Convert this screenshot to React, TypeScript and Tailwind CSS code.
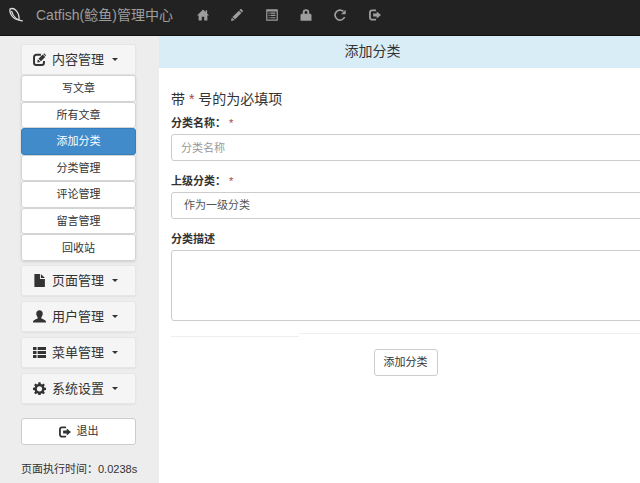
import { useState } from 'react'
import type { ReactNode } from 'react'

type IconName = 'home' | 'pencil' | 'list' | 'bag' | 'repeat' | 'logout' | 'edit' | 'file' | 'user' | 'rows' | 'cog'

const icons: Record<IconName, ReactNode> = {
  home: <path d="M7 .5 0 7.600h1.900V13.500h3.700V9h2.800v4.500h3.700V7.600H14l-2.200-2.300V1.500h-1.700v2z" />,
  pencil: <path d="m0 14 1-4 3 3zM1.700 9.400 9.200 1.900l2.900 2.900-7.500 7.500zM9.900 1.200l.8-.8c.5-.5 1-.5 1.500 0l1.400 1.400c.5.5.5 1 0 1.500l-.8.8z" />,
  list: (
    <path
      fillRule="evenodd"
      d="M.8.3h12.400a.6.6 0 0 1 .6.6v12.200a.6.6 0 0 1-.6.6H.8a.6.6 0 0 1-.6-.6V.9A.6.6 0 0 1 .8.3zm.8 2.500v9.500h10.800V2.800zM3 4h1.200v1.400H3zm2.200 0H11v1.400H5.200zM3 6.800h1.200v1.400H3zm2.200 0H11v1.400H5.200zM3 9.500h1.200v1.400H3zm2.200 0H11v1.400H5.200z"
    />
  ),
  bag: <path fillRule="evenodd" d="M3.200 5.500V4a3.800 3.800 0 0 1 7.600 0v1.500h1.400l1.200 1.200v7.100H.6V6.700l1.200-1.200zm2.200 0h3.200V4a1.600 1.600 0 0 0-3.200 0z" />,
  repeat: (
    <>
      <path d="M12.400 9.300A5.800 5.800 0 1 1 11 2.900" fill="none" stroke="currentColor" strokeWidth="2" />
      <path d="M13.600.8v5.400H8.200z" />
    </>
  ),
  logout: (
    <>
      <path d="M8.200 1.600H3.600A2.500 2.500 0 0 0 1.100 4.100v5.800a2.500 2.500 0 0 0 2.500 2.500h4.600" fill="none" stroke="currentColor" strokeWidth="2.100" />
      <path d="M9 2.800 14 7l-5 4.200V8.700H4.800V5.300H9z" />
    </>
  ),
  edit: (
    <>
      <path d="M8.500 1.900H3.600a2.500 2.500 0 0 0-2.500 2.500v6a2.500 2.500 0 0 0 2.500 2.500h5.700a2.500 2.500 0 0 0 2.500-2.500V8.600" fill="none" stroke="currentColor" strokeWidth="2.100" />
      <path d="m4.600 10.200.6-3.400 2.800 2.800zM5.900 6.200l4.600-4.600 2.700 2.700-4.600 4.600zM11.200 1l.8-.8L14 2.300l-.7 1.200z" />
    </>
  ),
  file: <path d="M1.500 0h6v5.300h5.300V14H1.500zM8.500 0l4.300 4.300H8.500z" />,
  user: <path d="M7 .2c2.200 0 3.500 1.500 3.500 3.700 0 1.700-.6 3-1.500 4v1.300c1.700.7 4.600 1.500 5 3.300v1H0v-1c.4-1.800 3.300-2.600 5-3.300V7.900c-.9-1-1.500-2.300-1.500-4C3.500 1.700 4.800.2 7 .2z" />,
  rows: <path d="M0 1h3.800v3.200H0zM5 1h9v3.200H5zM0 5.400h3.800v3.200H0zM5 5.400h9v3.200H5zM0 9.800h3.800V13H0zM5 9.800h9V13H5z" />,
  cog: (
    <path
      fillRule="evenodd"
      d="M5.900.3h2.200l.4 1.900 1.200.5 1.600-1.100 1.500 1.500-1.100 1.600.5 1.200 1.900.4v2.200l-1.900.4-.5 1.200 1.100 1.600-1.500 1.500-1.600-1.100-1.200.5-.4 1.900H5.900l-.4-1.900-1.200-.5-1.600 1.100-1.500-1.500 1.100-1.600-.5-1.200L0 8.500V6.300l1.800-.4.500-1.200-1.100-1.600 1.500-1.500 1.600 1.100 1.200-.5zM7 4.500a2.800 2.800 0 1 0 0 5.600 2.800 2.800 0 0 0 0-5.600z"
    />
  ),
}

function Icon({ name, className }: { name: IconName; className?: string }) {
  return (
    <svg viewBox="0 0 14 14" fill="currentColor" aria-hidden="true" className={`shrink-0 ${className ?? 'size-3'}`}>
      {icons[name]}
    </svg>
  )
}

const shortcuts: { icon: IconName; label: string }[] = [
  { icon: 'home', label: '首页' },
  { icon: 'pencil', label: '写文章' },
  { icon: 'list', label: '所有文章' },
  { icon: 'bag', label: '修改密码' },
  { icon: 'repeat', label: '清除缓存' },
  { icon: 'logout', label: '退出' },
]

const articleLinks = ['写文章', '所有文章', '添加分类', '分类管理', '评论管理', '留言管理', '回收站']

const otherMenus: { icon: IconName; label: string }[] = [
  { icon: 'file', label: '页面管理' },
  { icon: 'user', label: '用户管理' },
  { icon: 'rows', label: '菜单管理' },
  { icon: 'cog', label: '系统设置' },
]

function MenuButton({ icon, label, onClick }: { icon: IconName; label: string; onClick?: () => void }) {
  return (
    <button
      type="button"
      onClick={onClick}
      className="flex h-[31px] w-full items-center rounded-xs border border-[#e6e6e6] bg-[#f5f5f5] pl-[11px] text-[13px] shadow-xs"
    >
      <Icon name={icon} className="size-[13px]" />
      <span className="ml-[6px]">{label}</span>
      <span className="ml-2 border-x-[3px] border-t-[3px] border-x-transparent border-t-[#333]" />
    </button>
  )
}

function Required() {
  return <span className="font-normal text-[#a94442]">*</span>
}

export default function App() {
  const [open, setOpen] = useState(true)
  const [active, setActive] = useState('添加分类')

  return (
    <div className="flex min-h-screen flex-col overflow-hidden bg-white font-['Liberation_Sans','Noto_Sans_CJK_SC',sans-serif] text-[11px] text-[#333]">
      <header className="flex h-9 items-center border-b border-[#101010] bg-[#222] pb-[5px] pl-2 text-[#9d9d9d]">
        <svg viewBox="0 0 16 16" fill="none" stroke="#ddd" aria-hidden="true" className="size-4">
          <path d="M2.200 1.800C5 .8 8 2.800 9.800 6c1.200 2.200 1.500 4.800 1 6.800C8 12.800 5 11 3.300 8 2 5.800 1.600 3.500 2.200 1.800z" strokeWidth="1.300" />
          <path d="M3.500 4c1.300 4.500 5 9.800 11.500 10" strokeWidth="1.200" />
        </svg>
        <a href="#" className="ml-3 text-sm leading-5">Catfish(鲶鱼)管理中心</a>
        <nav className="ml-6 flex w-[184px] justify-between">
          {shortcuts.map((item) => (
            <a key={item.icon} href="#" aria-label={item.label}>
              <Icon name={item.icon} />
            </a>
          ))}
        </nav>
      </header>

      <div className="flex flex-1">
        <aside className="w-[159px] shrink-0 bg-[#ededed] pt-2 pr-[23px] pl-[21px]">
          <MenuButton icon="edit" label="内容管理" onClick={() => setOpen(!open)} />
          {open && (
            <div className="flex h-[186px] flex-col rounded-[3px] shadow-sm">
              {articleLinks.map((label) => (
                <a
                  key={label}
                  href="#"
                  onClick={() => setActive(label)}
                  className={`flex flex-1 items-center justify-center rounded-[3px] border ${
                    label === active ? 'border-[#357ebd] bg-[#428bca] text-white' : 'border-[#d4d4d4] bg-white'
                  }`}
                >
                  {label}
                </a>
              ))}
            </div>
          )}
          <div className="mt-1 flex flex-col gap-[5px]">
            {otherMenus.map((menu) => (
              <MenuButton key={menu.label} icon={menu.icon} label={menu.label} />
            ))}
          </div>
          <button type="button" className="mt-[14px] flex h-[27px] w-full items-center justify-center gap-[6px] rounded-[3px] border border-[#ccc] bg-white">
            <Icon name="logout" />
            退出
          </button>
          <p className="mt-4 leading-4 whitespace-nowrap">页面执行时间：0.0238s</p>
        </aside>

        <main className="min-w-0 flex-1">
          <h1 className="h-8 bg-[#d9edf7] pr-[54px] text-center text-sm leading-[30px]">添加分类</h1>
          <form className="-mr-1 pt-[21px] pl-3" onSubmit={(e) => e.preventDefault()}>
            <p className="text-sm leading-5">
              带 <Required /> 号的为必填项
            </p>
            <label htmlFor="name" className="mt-[6px] block leading-4 font-bold">
              分类名称： <Required />
            </label>
            <input
              id="name"
              type="text"
              placeholder="分类名称"
              className="mt-[3px] block h-[27px] w-full rounded-[3px] border border-[#ccc] bg-white px-[9px] placeholder:text-[#999]"
            />
            <label htmlFor="parent" className="mt-3 block leading-4 font-bold">
              上级分类： <Required />
            </label>
            <select id="parent" className="mt-[3px] block h-[27px] w-full appearance-none rounded-[3px] border border-[#ccc] bg-white px-3 text-[#555]">
              <option>作为一级分类</option>
            </select>
            <label htmlFor="description" className="mt-3 block leading-4 font-bold">
              分类描述
            </label>
            <textarea id="description" className="mt-[3px] block h-[71px] w-full resize-none rounded-[3px] border border-[#ccc] bg-white px-[9px] py-1" />
            <div className="mt-3 flex items-start">
              <div className="mt-[3px] w-32 border-t border-[#eee]" />
              <div className="flex-1 border-t border-[#eee]" />
            </div>
            <div className="mt-3 flex justify-center pr-1">
              <button type="submit" className="h-[27px] rounded-[3px] border border-[#ccc] bg-white px-[9px]">
                添加分类
              </button>
            </div>
          </form>
        </main>
      </div>
    </div>
  )
}
